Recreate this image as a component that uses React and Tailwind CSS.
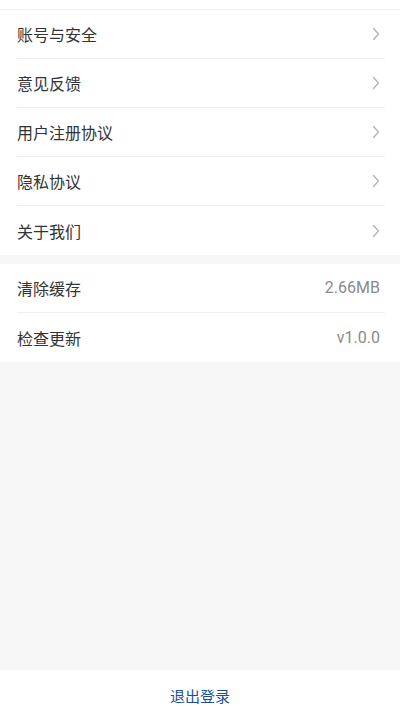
import React from 'react';

const font = { fontFamily: '"Noto Sans CJK SC", "Noto Sans", sans-serif' };
const numFont = { fontFamily: 'Roboto, "Noto Sans", sans-serif' };

const Chevron = () => (
  <svg width="8" height="14" viewBox="0 0 8 14" fill="none" className="shrink-0">
    <path d="M1.5 1.5 L6.5 7 L1.5 12.5" stroke="#b3b3b3" strokeWidth="1.3" strokeLinecap="round" strokeLinejoin="round" />
  </svg>
);

const Row = ({ label, value, last }) => (
  <div className={`h-[49px] ml-[17px] mr-[15px] flex items-center justify-between ${last ? '' : 'border-b border-[#efefef]'}`}>
    <span className="text-[16px] text-[#333333]">{label}</span>
    {value ? (
      <span className="text-[16px] text-[#8a8a8a] mr-[5px]" style={numFont}>{value}</span>
    ) : (
      <span className="mr-[5px]"><Chevron /></span>
    )}
  </div>
);

export default function App() {
  const links = ['账号与安全', '意见反馈', '用户注册协议', '隐私协议', '关于我们'];

  return (
    <div className="h-[711px] w-[400px] bg-[#f7f7f7] flex flex-col" style={font}>
      <div className="h-[10px] bg-white border-b border-[#eeeeee]" />
      <div className="bg-white">
        {links.map((l, i) => (
          <Row key={l} label={l} last={i === links.length - 1} />
        ))}
      </div>
      <div className="bg-white mt-[9px]">
        <Row label="清除缓存" value="2.66MB" />
        <Row label="检查更新" value="v1.0.0" last />
      </div>
      <div className="flex-1" />
      <div className="h-[41px] pt-[11px] bg-white flex items-center justify-center">
        <span className="text-[15px] text-[#1c4f96]">退出登录</span>
      </div>
    </div>
  );
}
